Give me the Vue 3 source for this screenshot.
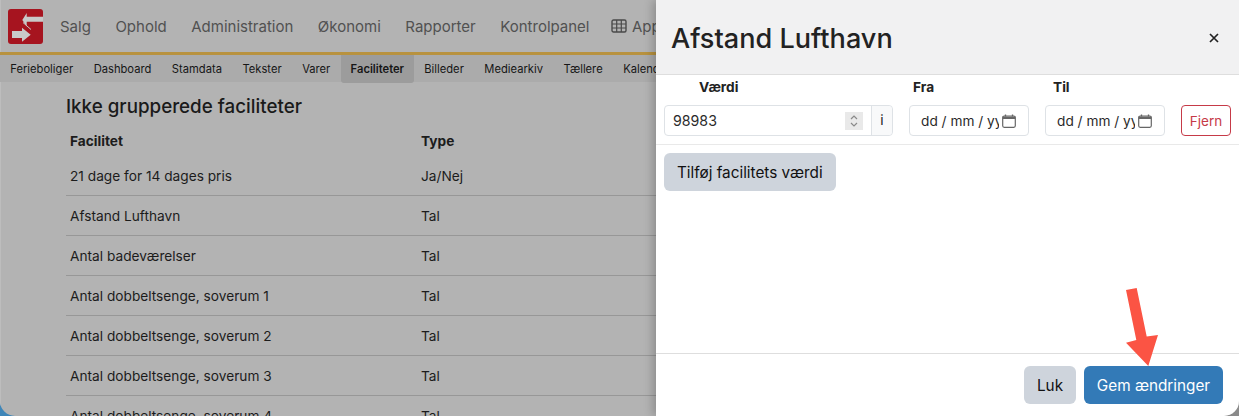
<script setup>
const nav = ['Salg', 'Ophold', 'Administration', 'Økonomi', 'Rapporter', 'Kontrolpanel']
const sub = ['Ferieboliger', 'Dashboard', 'Stamdata', 'Tekster', 'Varer', 'Faciliteter', 'Billeder', 'Mediearkiv', 'Tællere', 'Kalender']
const rows = [
  ['21 dage for 14 dages pris', 'Ja/Nej'],
  ['Afstand Lufthavn', 'Tal'],
  ['Antal badeværelser', 'Tal'],
  ['Antal dobbeltsenge, soverum 1', 'Tal'],
  ['Antal dobbeltsenge, soverum 2', 'Tal'],
  ['Antal dobbeltsenge, soverum 3', 'Tal'],
  ['Antal dobbeltsenge, soverum 4', 'Tal']
]
</script>

<template>
  <div class="page">
    <div class="frame">
      <div class="back">
        <header class="top">
          <svg class="logo" viewBox="0 0 35 35" width="35" height="35">
            <rect width="35" height="35" rx="3" fill="#a6141f" />
            <path d="M14.300 11 18.700 4V7.700H35V12.700H18.700V17.500Z" fill="#c9c9c9" />
            <path d="M4 22H14V18.700L22.700 25.700 14 32.700V29H4Z" fill="#c9c9c9" />
            <path d="M15 13.500 23 20.500" stroke="#c9c9c9" stroke-width="1" />
          </svg>
          <nav class="mainnav">
            <span v-for="n in nav" :key="n">{{ n }}</span>
            <span class="apps">
              <svg width="16" height="14" viewBox="0 0 16 14">
                <rect x="1" y="1" width="14" height="12" rx="1.500" fill="none" stroke="#4a4a4a" stroke-width="1.400" />
                <path d="M1 5H15M1 9H15M5.700 1V13M10.300 1V13" stroke="#4a4a4a" stroke-width="1.200" />
              </svg>
              Apps
            </span>
          </nav>
        </header>
        <nav class="subnav">
          <span v-for="s in sub" :key="s" :class="{ on: s === 'Faciliteter' }">{{ s }}</span>
        </nav>
        <main class="content">
          <h2>Ikke grupperede faciliteter</h2>
          <div class="row head"><b>Facilitet</b><b>Type</b></div>
          <div v-for="r in rows" :key="r[0]" class="row"><span>{{ r[0] }}</span><span>{{ r[1] }}</span></div>
        </main>
      </div>

      <aside class="panel">
        <div class="phead">
          <h1>Afstand Lufthavn</h1>
          <svg class="close" width="10" height="10" viewBox="0 0 10 10">
            <path d="M1 1 9 9M9 1 1 9" stroke="#222" stroke-width="1.700" />
          </svg>
        </div>
        <div class="pbody">
          <div class="values">
            <div class="labels">
              <b class="l1">Værdi</b><b class="l2">Fra</b><b class="l3">Til</b>
            </div>
            <div class="inputs">
              <div class="num">
                <span class="val">98983</span>
                <span class="spin">
                  <svg width="10" height="14" viewBox="0 0 10 14">
                    <path d="M2 5 5 2 8 5M2 9 5 12 8 9" fill="none" stroke="#8a8a8a" stroke-width="1.200" />
                  </svg>
                </span>
                <span class="unit">i</span>
              </div>
              <div v-for="d in 2" :key="d" class="date">
                <span class="dtext">dd / mm / yyyy</span>
                <svg width="14" height="14" viewBox="0 0 14 14">
                  <rect x="0.700" y="2" width="12.600" height="11.300" rx="1.500" fill="none" stroke="#666" stroke-width="1.200" />
                  <path d="M0.700 2.500H13.300V5H0.700Z" fill="#666" />
                  <path d="M3.500 0.500V2.500M10.500 0.500V2.500" stroke="#666" stroke-width="1.300" />
                </svg>
              </div>
              <button class="remove">Fjern</button>
            </div>
          </div>
          <button class="add">Tilføj facilitets værdi</button>
        </div>
        <div class="pfoot">
          <button class="add luk">Luk</button>
          <button class="save">Gem ændringer</button>
        </div>
        <svg class="arrow" width="40" height="82" viewBox="0 0 40 82">
          <path d="M4 4 14.700 2 24.700 50.500 36 49 26.300 80 4 56.700 14.300 54Z" fill="#fb5444" />
        </svg>
      </aside>
    </div>
  </div>
</template>

<style>
html, body { margin: 0; background: #fff; }
</style>

<style scoped>
.page {
  width: 1239px;
  height: 416px;
  overflow: hidden;
  background: linear-gradient(90deg, #3f86b8 0 50%, #8a8a8a 50% 100%);
  font-family: Inter, "Liberation Sans", sans-serif;
  color: #1c1c1c;
}
.frame {
  height: 100%;
  display: flex;
  overflow: hidden;
  background: #b3b3b3;
  border-radius: 0 0 15px 15px;
}
.back { width: 656px; flex: none; overflow: hidden; box-shadow: inset 1px 0 0 #bdbdbd; }
.top {
  height: 52px;
  display: flex;
  align-items: center;
  padding-left: 8px;
  gap: 17px;
  border-bottom: 3px solid #b8923f;
}
.logo { flex: none; }
.mainnav { display: flex; gap: 24.500px; white-space: nowrap; font-size: 15px; color: #515151; }
.apps { display: flex; align-items: center; gap: 5px; margin-left: -3px; }
.subnav {
  height: 27px;
  display: flex;
  background: #ababab;
  font-size: 11.200px;
  line-height: 28px;
  white-space: nowrap;
  color: #161616;
}
.subnav span { padding: 0 10.250px; }
.subnav .on { height: 28px; padding: 0 10px; background: #9c9c9c; border-radius: 0 0 3px 3px; font-weight: 600; }
.content { padding: 13px 0 0 66px; }
h2 { margin: 0 0 10px; font-size: 18.800px; line-height: 24px; font-weight: 500; color: #1a1a1a; }
.row {
  display: grid;
  grid-template-columns: 351px 1fr;
  height: 39px;
  line-height: 41px;
  padding-left: 4px;
  border-bottom: 1px solid #979797;
  font-size: 13.700px;
}
.row.head { height: 27px; line-height: 24px; border-bottom: 0; }
.panel {
  position: relative;
  flex: 1;
  display: flex;
  flex-direction: column;
  background: #fff;
  box-shadow: -3px 0 9px rgba(0, 0, 0, 0.22);
}
.phead {
  height: 75px;
  box-sizing: border-box;
  flex: none;
  background: #f1f1f2;
  border-bottom: 1px solid #dedede;
  display: flex;
  align-items: center;
  justify-content: space-between;
  padding: 2px 20px 0 15px;
}
h1 { margin: 0; font-size: 27.100px; font-weight: 500; color: #222; }
.pbody { flex: 1; }
.values { border-bottom: 1px solid #e9e9e9; height: 70px; font-size: 13.700px; box-sizing: border-box; }
.labels { position: relative; height: 30px; line-height: 24px; color: #222; }
.labels b { position: absolute; top: 0; font-weight: 700; }
.l1 { left: 43px; }
.l2 { left: 257px; }
.l3 { left: 397px; }
.inputs { display: flex; padding-left: 8px; height: 31px; font-size: 13.700px; color: #2a2a2a; }
.num {
  width: 229px;
  box-sizing: border-box;
  border: 1px solid #dee2e6;
  border-radius: 4px;
  display: flex;
  align-items: center;
  padding-left: 8px;
}
.val { flex: 1; font-size: 14.200px; }
.spin {
  width: 18px;
  height: 18px;
  background: #e9e9e9;
  display: flex;
  align-items: center;
  justify-content: center;
  margin-right: 8px;
}
.unit {
  width: 20px;
  height: 100%;
  text-align: center;
  line-height: 29px;
  color: #222;
  background: #f8f9fa;
  border-left: 1px solid #dee2e6;
  border-radius: 0 4px 4px 0;
}
.date {
  width: 120px;
  box-sizing: border-box;
  border: 1px solid #dee2e6;
  border-radius: 4px;
  margin-left: 16px;
  padding-left: 11px;
  display: flex;
  align-items: center;
  gap: 3px;
}
.dtext { width: 78px; overflow: hidden; white-space: nowrap; }
button { font-family: inherit; cursor: pointer; }
.remove {
  margin-left: 16px;
  width: 50px;
  box-sizing: border-box;
  background: #fff;
  border: 1px solid #c63a48;
  border-radius: 4px;
  color: #c63a48;
  font-size: 13.500px;
  padding: 0;
}
.add {
  margin: 8px 0 0 8px;
  height: 38px;
  padding: 0 13px;
  border: 0;
  border-radius: 6px;
  background: #ced4dc;
  color: #111;
  font-size: 15.300px;
}
.pfoot {
  height: 63px;
  flex: none;
  border-top: 1px solid #dedede;
  display: flex;
  justify-content: flex-end;
  align-items: flex-start;
  gap: 8px;
  padding: 12px 16px 0 0;
  box-sizing: border-box;
}
.luk { margin: 0; width: 52px; padding: 0; }
.save {
  height: 38px;
  width: 139px;
  padding: 0;
  border: 0;
  border-radius: 6px;
  background: #337ab7;
  color: #fff;
  font-size: 15.300px;
}
.arrow { position: absolute; left: 466px; top: 286px; }
</style>
